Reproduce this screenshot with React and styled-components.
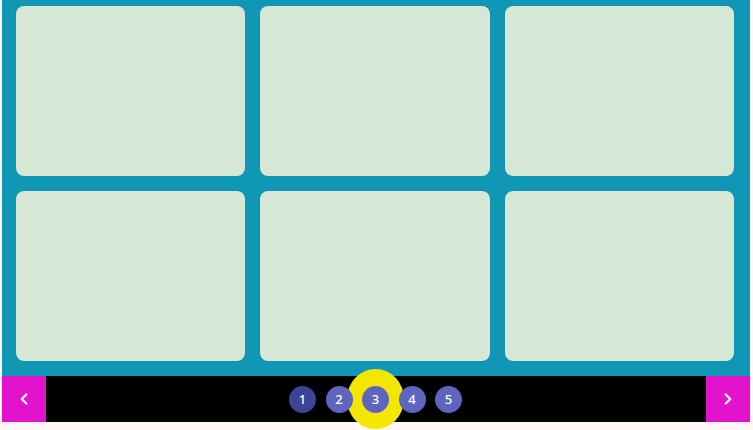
import React, { useState } from 'react';
import styled, { createGlobalStyle } from 'styled-components';
import { ChevronLeft, ChevronRight } from 'lucide-react';

const GlobalStyle = createGlobalStyle`
  html, body {
    margin: 0;
    padding: 0;
    background: #fdf6f4;
    font-family: "Noto Sans", "DejaVu Sans", sans-serif;
  }
  body, #root {
    min-height: 100vh;
  }
`;

const Page = styled.div`
  width: 748px;
  min-height: 100vh;
  margin-left: 2px;
  display: flex;
  flex-direction: column;
`;

const Stage = styled.div`
  background-color: #1197b6;
  padding: 6px 16px 15px 14px;
  display: grid;
  grid-template-columns: repeat(3, 1fr);
  grid-auto-rows: 170px;
  column-gap: 15px;
  row-gap: 15px;
`;

const Slide = styled.div`
  background-color: #d6e8d5;
  border-radius: 8px;
  box-shadow: 0 0 2px rgba(0, 0, 0, 0.12);
`;

const Pager = styled.div`
  position: relative;
  height: 46px;
  background-color: #000;
  display: flex;
  align-items: center;
  justify-content: space-between;
`;

const ArrowButton = styled.button`
  width: 44px;
  height: 46px;
  border: none;
  padding: 0;
  background-color: #e312cb;
  color: #fff;
  display: flex;
  align-items: center;
  justify-content: center;
  cursor: pointer;
`;

const Dots = styled.div`
  display: flex;
  align-items: center;
  gap: 9.5px;
  margin-right: 1px;
`;

const DotWrap = styled.div`
  position: relative;
  z-index: ${(p) => (p.$active ? 1 : 2)};
  display: flex;
`;

const Dot = styled.button`
  position: relative;
  width: 27px;
  height: 27px;
  border-radius: 50%;
  border: none;
  padding: 0;
  background-color: ${(p) => (p.$visited ? '#3b4497' : '#5d65bf')};
  color: #fff;
  font-family: "Noto Sans", "DejaVu Sans", sans-serif;
  font-size: 13px;
  font-weight: 500;
  line-height: 27px;
  text-align: center;
  cursor: pointer;
`;

/* yellow halo behind the current dot, under its neighbours */
const Halo = styled.span`
  position: absolute;
  left: -15px;
  top: -17px;
  width: 57px;
  height: 60px;
  border-radius: 50%;
  background-color: #f3e600;
`;

const slides = [1, 2, 3, 4, 5, 6];
const pages = [1, 2, 3, 4, 5];

export default function App() {
  const [current, setCurrent] = useState(3);

  return (
    <>
      <GlobalStyle />
      <Page>
        <Stage>
          {slides.map((s) => (
            <Slide key={s} />
          ))}
        </Stage>
        <Pager>
          <ArrowButton onClick={() => setCurrent(Math.max(1, current - 1))}>
            <ChevronLeft size={18} strokeWidth={3} />
          </ArrowButton>
          <Dots>
            {pages.map((n) => (
              <DotWrap key={n} $active={n === current}>
                {n === current && <Halo />}
                <Dot $visited={n === 1} onClick={() => setCurrent(n)}>
                  {n}
                </Dot>
              </DotWrap>
            ))}
          </Dots>
          <ArrowButton onClick={() => setCurrent(Math.min(5, current + 1))}>
            <ChevronRight size={18} strokeWidth={3} />
          </ArrowButton>
        </Pager>
      </Page>
    </>
  );
}
